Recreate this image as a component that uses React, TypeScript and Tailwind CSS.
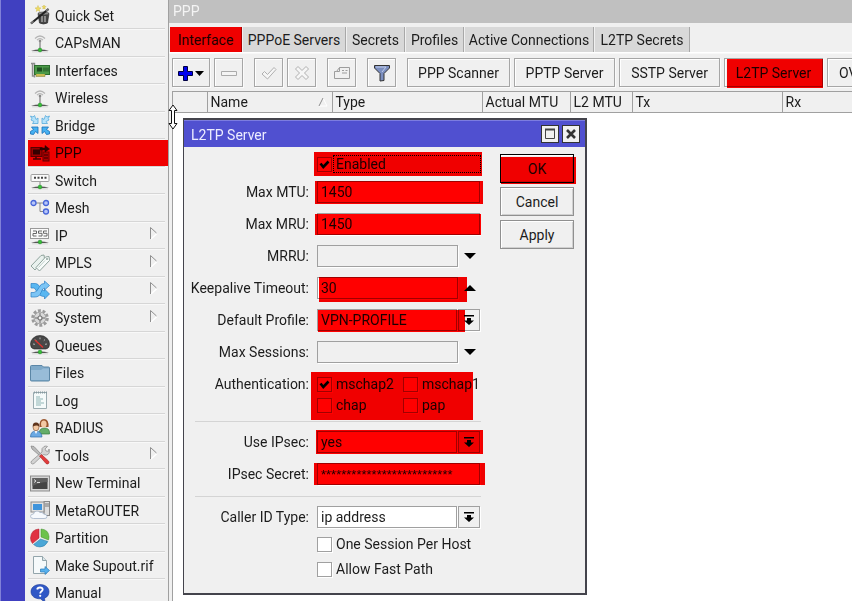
import { useId, useState } from 'react';
import type { ReactNode } from 'react';
import clsx from 'clsx';

/* ---------- sidebar icons, all on a 20x20 grid ---------- */

const nic = (
  <>
    <path d="M1 17.500Q10 15.500 19 17.500 10 18.800 1 17.500z" fill="#555" />
    <path d="M2 18.800h16" stroke="#cfcfcf" strokeWidth=".8" />
    <circle cx="10" cy="17" r="1.900" fill="#35c035" stroke="#2b8a31" strokeWidth=".5" />
  </>
);

const antenna = (
  <>
    <path d="M5 5.500Q10 .5 15 5.500M7 7.200Q10 4 13 7.200" fill="none" stroke="#b5b5b5" strokeWidth="1.200" />
    <path d="M10 8v8" stroke="#9a9a9a" strokeWidth="1.600" />
    <circle cx="10" cy="8" r="1.300" fill="#8a8a8a" />
    {nic}
  </>
);

const icons: Record<string, ReactNode> = {
  wand: (
    <>
      <path d="M8 8.500h11l-1.500 9.500q-4 2-8 0z" fill="#454545" stroke="#222" strokeWidth=".6" />
      <path d="M12 11v6M15 11v6" stroke="#a9a9a9" strokeWidth="1.400" />
      <ellipse cx="13.500" cy="8.500" rx="5.500" ry="1.500" fill="#8d8d8d" stroke="#333" strokeWidth=".6" />
      <path d="M1 18.500L18.500 4" stroke="#222" strokeWidth="2.200" />
      <path d="M1 18.500L3.500 16.400M16 6l2.500-2" stroke="#777" strokeWidth="1.800" />
      <path d="M8 .500l.8 2.200 2.200.3-1.800 1.300.5 2.200L8 5.200 6.300 6.500l.5-2.200L5 3l2.200-.3zM14 0l.5 1.300 1.500.2-1 1 .2 1.500-1.200-.8-1.200.8.2-1.500-1-1 1.500-.2z" fill="#f0dc62" stroke="#c7b23a" strokeWidth=".4" />
    </>
  ),
  antenna,
  card: (
    <>
      <path d="M1 3.500h3.500v14M2.500 4v12h2" fill="none" stroke="#8d8d8d" strokeWidth="1.400" />
      <rect x="4.500" y="5.500" width="15" height="9" fill="#4c9a48" stroke="#2b6d2d" />
      <rect x="7" y="7.500" width="5" height="4" fill="#1d4d20" />
      <path d="M14 7.500v4M16 7.500v4M18 7.500v4" stroke="#1d4d20" />
      <path d="M6 14v2.500h9V14" fill="#c9bb52" stroke="#7e7a35" strokeWidth=".5" />
    </>
  ),
  bridge: (
    <>
      <path d="M.500 1l2.500 1L4.500.500 6 4.500l2-1.500v5.500H2.500L4 6.500 1 5l.8-1.500z" fill="#b5e2fa" stroke="#56a9dc" strokeWidth=".8" />
      <path d="M19.500 1L17 2 15.500.500 14 4.500 12 3v5.500h5.500L16 6.500 19 5l-.8-1.500z" fill="#b5e2fa" stroke="#56a9dc" strokeWidth=".8" />
      <path d="M.500 19l3 .5 2-3L8 18.500V12H1.500l2 2.500-3 2z" fill="#46b1f2" stroke="#176fb6" strokeWidth=".8" />
      <path d="M19.500 19l-3 .5-2-3-2.500 2V12h6.500l-2 2.500 3 2z" fill="#46b1f2" stroke="#176fb6" strokeWidth=".8" />
    </>
  ),
  ppp: (
    <>
      <rect x="1" y="4.500" width="11" height="9" fill="#9a9a9a" stroke="#555" />
      <rect x="3" y="6.500" width="7" height="5" fill="#333" />
      <path d="M3 16h8M6 14v2" stroke="#444" strokeWidth="1.500" />
      <rect x="13" y="9" width="6" height="9" fill="#aaa" stroke="#666" />
      <path d="M14 12h4M14 15h4" stroke="#333" />
      <path d="M10 5h5V2.500L19.500 6 15 9V7h-5z" fill="#333" stroke="#222" strokeWidth=".5" />
    </>
  ),
  switch: (
    <>
      <rect x="1" y="4.500" width="18" height="7" rx="1" fill="#fafafa" stroke="#a0a0a0" />
      <path d="M4 7.800h13" stroke="#444" strokeWidth="2" strokeDasharray="2 1.500" />
      <path d="M10 12v4" stroke="#888" />
      {nic}
    </>
  ),
  mesh: (
    <>
      <path d="M6 5h7M10 5v8.500h4" fill="none" stroke="#888" />
      <circle cx="3.500" cy="5" r="2.500" fill="#b7c6fa" stroke="#4765d8" strokeWidth="1.300" />
      <circle cx="16" cy="5" r="2.500" fill="#b7c6fa" stroke="#4765d8" strokeWidth="1.300" />
      <circle cx="16" cy="13.500" r="2.500" fill="#b7c6fa" stroke="#4765d8" strokeWidth="1.300" />
    </>
  ),
  ip: (
    <>
      <rect x=".5" y="3.500" width="18" height="10" fill="#fafafa" stroke="#999" />
      <path d="M3 6h3.500v2.500H3V11h3.500M12 6H8.500v2.300H12V11H8.500M17 6h-3.500v2.300H17V11h-3.500" fill="none" stroke="#666" />
      {nic}
    </>
  ),
  mpls: (
    <>
      <path d="M1 13L11 2.500l3-.5.5 3.500L5 17z" fill="#e9f1ee" stroke="#8fa39c" />
      <path d="M6 14.500L15.500 4l3.500-.5.500 4L9.500 18z" fill="#f7fbfa" stroke="#8fa39c" />
      <circle cx="17" cy="6" r="1" fill="#8fa39c" />
      <path d="M8.500 14.500L15 7.500" stroke="#bfcfc9" />
    </>
  ),
  routing: (
    <>
      <path d="M1 3.500h4.500q2.500 0 4.500 3.500t4.500 4V9l5 5-5 5v-2.500q-5 0-7.500-4.500T4 8H1z" fill="#59b7f1" stroke="#2c80c4" strokeWidth=".7" />
      <path d="M1 17v-4.500h3Q7 12 9 7.500T14.500 3.500V1l5 4.500-5 4.500V8q-2 0-3.500 4.500T5 17z" fill="#7cc5f5" stroke="#2c80c4" strokeWidth=".7" />
    </>
  ),
  gear: (
    <>
      <circle cx="10" cy="10" r="7.300" fill="none" stroke="#9b9b9b" strokeWidth="3" strokeDasharray="2.900 1.690" />
      <circle cx="10" cy="10" r="5.900" fill="#d9d9d9" stroke="#a2a2a2" strokeWidth="1" />
      <path d="M10 5v3M10 12v3M5 10h3M12 10h3" stroke="#8f8f8f" strokeWidth="1.400" />
      <circle cx="10" cy="10" r="2" fill="#f3f3f3" stroke="#777" strokeWidth="1.200" />
    </>
  ),
  gauge: (
    <>
      <path d="M.500 9a9.500 8.500 0 0 1 19 0q0 4.500-3.500 5H4Q.500 13.500.500 9z" fill="#484848" stroke="#222" strokeWidth=".6" />
      <path d="M3 9l2 .3M5 4.500l1.200 1.200M10 2.500v1.800M15 4.500l-1.200 1.200M17 9l-2 .3" stroke="#b5b5b5" />
      <path d="M5 5l8 7.500" stroke="#e2332f" strokeWidth="1.300" />
      {nic}
    </>
  ),
  folder: (
    <>
      <path d="M.500 3.500q0-1 1-1h10.500l1.500 1.500h5q1 0 1 1v12q0 1-1 1h-17q-1 0-1-1z" fill="#7fa9c8" stroke="#5b86a6" />
      <path d="M1 7h10l2-1.500H19V16.500q0 .5-.5.500h-17Q1 17 1 16.500z" fill="#98bcd8" />
    </>
  ),
  log: (
    <>
      <path d="M3.500 2.500h13v16h-13z" fill="#f5fafa" stroke="#9aabb0" />
      <path d="M4 2.500h13" stroke="#879aa0" strokeWidth="2" strokeDasharray="1 1" />
      <path d="M6 7h4M6 9h7M6 11h5M6 13h8M6 15h5" stroke="#8fb5b5" />
    </>
  ),
  users: (
    <>
      <path d="M9 16q0-6 5.500-6t5 6z" fill="#64ad68" stroke="#34783b" strokeWidth=".7" />
      <path d="M9.500 9Q9 1 14 1t4.500 8z" fill="#98542c" />
      <ellipse cx="13.800" cy="6" rx="2.800" ry="3.500" fill="#f3c9a4" />
      <path d="M.500 19q0-6 5.500-6t6 6z" fill="#6ba9e3" stroke="#2f6dab" strokeWidth=".7" />
      <path d="M4.500 13L6 16l1.500-3z" fill="#fff" />
      <ellipse cx="6" cy="9" rx="3" ry="3.800" fill="#f3c9a4" stroke="#7a4a2a" strokeWidth=".6" />
      <path d="M2.800 8.500Q2.500 4.500 6 4.500t3.200 4Q7 6.500 2.800 8.500z" fill="#5f351d" />
    </>
  ),
  tools: (
    <>
      <path d="M1 1l3 .5L11 9l-1.500 1.500L2 4z" fill="#bbb" stroke="#777" strokeWidth=".6" />
      <path d="M1.500 16L12 7q-1-4 2-5.500 2-1 3.500 0L15 4l1 2 2.500.3L19 4q1.500 5-2.500 6-1.500.3-3-.5L4 18.500q-1.500 1-2.500 0t0-2.500z" fill="#d3d3d3" stroke="#888" strokeWidth=".7" />
      <path d="M9.500 11l2-1.500 7 6.500q1 1.500 0 2.500t-2.500 0z" fill="#e23c3c" stroke="#a32222" strokeWidth=".6" />
    </>
  ),
  terminal: (
    <>
      <rect x=".5" y="3" width="19" height="15" fill="#d5d5d5" stroke="#8d8d8d" />
      <rect x="2.500" y="5" width="15" height="11" fill="#454545" />
      <path d="M2.500 5h15v4q-7 0-15 4z" fill="#5f5f5f" />
      <path d="M4 6.500L6 8 4 9.500M7 9.500h3" fill="none" stroke="#e8e8e8" strokeWidth=".9" />
    </>
  ),
  metarouter: (
    <>
      <rect x="14" y="1.500" width="5.500" height="14" fill="#dedede" stroke="#888" />
      <path d="M15 4h4M15 6h4" stroke="#777" />
      <rect x="1" y="2" width="13" height="10" fill="#e1e1e1" stroke="#8b8b8b" />
      <rect x="3" y="4" width="9" height="6" fill="#3f94dc" />
      <path d="M3.500 18.500q-3 0-3-2.200T3.500 14q.5-3 3.500-3 2 0 3 1.500 2.500-1 3.500 1.500 3.500.2 3.500 2.500t-3 2z" fill="#f6f9fd" stroke="#a3b3c6" strokeWidth=".8" />
    </>
  ),
  partition: (
    <>
      <path d="M9 10V1Q1 1.500.500 10q0 3.500 2 5.500z" fill="#e03242" stroke="#a81d2c" strokeWidth=".5" />
      <path d="M11 9V1q7.500.5 8 7.500 0 2-.5 3.500z" fill="#6cc24c" stroke="#418c2b" strokeWidth=".5" />
      <path d="M10.500 11l7.500 2.500q-3 5.500-8 5.500-4 0-6.500-2.500z" fill="#4aa6d6" stroke="#2a779f" strokeWidth=".5" />
    </>
  ),
  supout: (
    <>
      <path d="M3.500 1.500h9l4 4v13h-13z" fill="#f6fafb" stroke="#93a5ab" />
      <path d="M12.500 1.500v4h4" fill="#dbe5e8" stroke="#93a5ab" />
      <path d="M10.500 14h4.500v-2.500l4.500 4-4.500 4V17h-4.500z" fill="#57b1ee" stroke="#2879b8" strokeWidth=".7" />
    </>
  ),
  manual: (
    <>
      <path d="M10 1.500c5.200 0 9 3 9 7.200 0 3-1.500 5.300-4.500 6.500L15 19.500l-4.500-3.700C5 16 1 13 1 8.700s3.800-7.200 9-7.200z" fill="#3058c6" stroke="#1d3b96" strokeWidth=".6" />
      <path d="M7.200 6.500q.3-2 2.800-2t2.700 2c0 1.700-2.500 1.800-2.500 4" fill="none" stroke="#fff" strokeWidth="1.800" />
      <circle cx="10.200" cy="12.800" r="1.100" fill="#fff" />
    </>
  ),
};

const menu = [
  { label: 'Quick Set', icon: 'wand' },
  { label: 'CAPsMAN', icon: 'antenna' },
  { label: 'Interfaces', icon: 'card' },
  { label: 'Wireless', icon: 'antenna' },
  { label: 'Bridge', icon: 'bridge' },
  { label: 'PPP', icon: 'ppp', marked: true },
  { label: 'Switch', icon: 'switch' },
  { label: 'Mesh', icon: 'mesh' },
  { label: 'IP', icon: 'ip', sub: true },
  { label: 'MPLS', icon: 'mpls', sub: true },
  { label: 'Routing', icon: 'routing', sub: true },
  { label: 'System', icon: 'gear', sub: true },
  { label: 'Queues', icon: 'gauge' },
  { label: 'Files', icon: 'folder' },
  { label: 'Log', icon: 'log' },
  { label: 'RADIUS', icon: 'users' },
  { label: 'Tools', icon: 'tools', sub: true },
  { label: 'New Terminal', icon: 'terminal' },
  { label: 'MetaROUTER', icon: 'metarouter' },
  { label: 'Partition', icon: 'partition' },
  { label: 'Make Supout.rif', icon: 'supout' },
  { label: 'Manual', icon: 'manual' },
];

// Red marker laid over a control, the text stays readable below it.
function Marker({ className = 'inset-0' }: { className?: string }) {
  return <span className={clsx('pointer-events-none absolute bg-[#ff0000] mix-blend-multiply', className)} />;
}

function Sidebar() {
  return (
    <nav className="w-[143px] shrink-0 pt-[2px] pl-[3px]">
      <ul>
        {menu.map((item) => (
          <li key={item.label} className="relative odd:h-[27px] even:h-7">
            <button className="flex h-full w-[137px] items-center border-b border-[#d6d6d6] pl-[2px] text-left shadow-[0_1px_0_#f8f8f8]">
              <svg viewBox="0 0 20 20" className="size-5 shrink-0">{icons[item.icon]}</svg>
              <span className="flex-1 pt-px pl-[5px] whitespace-nowrap">{item.label}</span>
              {item.sub && (
                <svg viewBox="0 0 10 14" className="mr-[6px] mb-1 h-[14px] w-[10px]">
                  <path d="M2 13L8 7.500" stroke="#fff" strokeWidth="1.500" />
                  <path d="M1.500 13V1.500L7.500 7" fill="none" stroke="#8f8f8f" />
                </svg>
              )}
            </button>
            {item.marked && <Marker className="inset-y-px left-0 w-[140px]" />}
          </li>
        ))}
      </ul>
    </nav>
  );
}

/* ---------- PPP window ---------- */

const tabs = [
  { label: 'Interface', width: 'w-[72px]' },
  { label: 'PPPoE Servers', width: 'w-[103px]' },
  { label: 'Secrets', width: 'w-[58px]' },
  { label: 'Profiles', width: 'w-[58px]' },
  { label: 'Active Connections', width: 'w-[129px]' },
  { label: 'L2TP Secrets', width: 'w-[95px]' },
];

const columns = [
  { label: '', width: 'w-[34px]' },
  { label: 'Name', width: 'w-[125px]', sorted: true },
  { label: 'Type', width: 'w-[150px]' },
  { label: 'Actual MTU', width: 'w-[88px]' },
  { label: 'L2 MTU', width: 'w-[62px]' },
  { label: 'Tx', width: 'w-[150px]' },
  { label: 'Rx', width: 'w-[151px]' },
];

function ToolButton({ className, label, children }: { className?: string; label?: string; children: ReactNode }) {
  return (
    <button
      aria-label={label}
      className={clsx(
        'relative flex h-[29px] shrink-0 items-center justify-center border border-[#a6a6a6] bg-[#f0f0f0] whitespace-nowrap shadow-[inset_1px_1px_0_#fff,1px_1px_0_#fafafa]',
        className,
      )}
    >
      {children}
    </button>
  );
}

function Toolbar() {
  return (
    <div className="flex gap-1 pt-1 pl-[3px]">
      <ToolButton label="Add" className="w-[38px]">
        <svg viewBox="0 0 28 16" className="h-4 w-7">
          <path d="M6.500 1.500h4v5h5v4h-5v5h-4v-5h-5v-4h5z" fill="#0000f0" stroke="#000040" />
          <path d="M18 6h9l-4.500 5z" fill="#000" />
        </svg>
      </ToolButton>
      <ToolButton label="Remove" className="w-[29px]">
        <svg viewBox="0 0 16 16" className="size-4"><path d="M.500 6.500h15v4H.500z" fill="#f4f4f4" stroke="#ababab" /></svg>
      </ToolButton>
      <ToolButton label="Enable" className="ml-[7px] w-[29px]">
        <svg viewBox="0 0 16 16" className="size-4">
          <path d="M1 9l2.500-2.500 3 3L13 2.500l2 2L6.500 14z" fill="#f6f6f6" stroke="#b0b0b0" />
        </svg>
      </ToolButton>
      <ToolButton label="Disable" className="w-[29px]">
        <svg viewBox="0 0 16 16" className="size-4">
          <path d="M1.500 4L4 1.500l4 4 4-4L14.500 4l-4 4 4 4-2.500 2.500-4-4-4 4L1.500 12l4-4z" fill="#f6f6f6" stroke="#b0b0b0" />
        </svg>
      </ToolButton>
      <ToolButton label="Comment" className="ml-[7px] w-[29px]">
        <svg viewBox="0 0 16 16" className="size-4">
          <path d="M5.500 2.500h10v11H.500v-7h2zM5.500 2.500v4h-3M8 5.500h2M11.500 5.500h2M8 8h5" fill="none" stroke="#9d9d9d" />
        </svg>
      </ToolButton>
      <ToolButton label="Filter" className="ml-[7px] w-[29px]">
        <svg viewBox="0 0 16 18" className="h-[18px] w-4">
          <path d="M.500 1.500h15v2.500L10 9.500v7l-4 .5V9.500L.500 4z" fill="#7c8fc0" stroke="#333" />
          <path d="M2 3h10L8 8" fill="none" stroke="#c3cfec" />
        </svg>
      </ToolButton>
      <ToolButton className="ml-[7px] w-[103px]">PPP Scanner</ToolButton>
      <ToolButton className="w-[101px]">PPTP Server</ToolButton>
      <ToolButton className="w-[101px]">SSTP Server</ToolButton>
      <ToolButton className="w-[99px]">
        L2TP Server
        <Marker className="-right-px -bottom-[2px] top-0 left-[2px]" />
      </ToolButton>
      <ToolButton className="w-[104px]">OVPN Server</ToolButton>
    </div>
  );
}

function PppWindow() {
  return (
    <main className="flex min-w-0 flex-1 flex-col overflow-hidden border-l border-[#a0a0a0]">
      <h1 className="h-[23px] bg-[#c0c0c0] pl-1 leading-[23px] text-[#f4f4f4]">PPP</h1>
      <div role="tablist" className="flex items-end gap-px border-b border-white pt-1 pl-px">
        {tabs.map((tab, i) => (
          <button
            key={tab.label}
            role="tab"
            aria-selected={i === 0}
            className={clsx(
              'relative h-[25px] border-r border-[#a8a8a8] whitespace-nowrap',
              tab.width,
              i === 0 ? 'bg-[#f0f0f0]' : 'bg-[#d8d8d8] pt-px',
            )}
          >
            {tab.label}
            {i === 0 && <Marker className="-right-px inset-y-0 left-0" />}
          </button>
        ))}
      </div>
      <div className="border-t border-[#f8f8f8]">
        <Toolbar />
      </div>
      <div className="mt-1 ml-[3px] flex-1 border-l border-[#a0a0a0] bg-white">
        <table className="w-[760px] table-fixed border-collapse text-left">
          <thead>
            <tr className="h-[21px] bg-[#f0f0f0]">
              {columns.map((col) => (
                <th key={col.label} className={clsx('border-y border-r border-[#a0a0a0] p-0 pl-[3px] font-normal', col.width)}>
                  <span className="flex items-center justify-between leading-5 whitespace-nowrap">
                    {col.label}
                    {col.sorted && (
                      <svg viewBox="0 0 10 10" className="mr-1 size-[10px]">
                        <path d="M5 1l4 8H1" fill="none" stroke="#fff" />
                        <path d="M1 9l4-8" stroke="#8c8c8c" />
                      </svg>
                    )}
                  </span>
                </th>
              ))}
            </tr>
          </thead>
        </table>
      </div>
    </main>
  );
}

/* ---------- L2TP Server dialog ---------- */

const fieldBox = 'h-[22px] border border-[#a0a0a0] pl-[3px] shadow-[1px_1px_0_#fff] outline-none';

function Row({ label, htmlFor, children }: { label: string; htmlFor?: string; children: ReactNode }) {
  return (
    <div className="flex h-8 items-center">
      <label htmlFor={htmlFor} className="w-[125px] shrink-0 text-right whitespace-nowrap">{label}</label>
      <div className="relative ml-2 flex items-center">{children}</div>
    </div>
  );
}

function Toggle({ direction = 'down', label }: { direction?: 'up' | 'down'; label: string }) {
  return (
    <button aria-label={label} className="flex h-[22px] w-6 items-center justify-center">
      <svg viewBox="0 0 12 6" className="h-[6px] w-3">
        <path d={direction === 'up' ? 'M0 6h12L6 0z' : 'M0 0h12L6 6z'} fill="#000" />
      </svg>
    </button>
  );
}

function TextRow({ label, value = '', toggle, marker }: { label: string; value?: string; toggle?: 'up' | 'down'; marker?: string }) {
  const id = useId();
  return (
    <Row label={`${label}:`} htmlFor={id}>
      <input
        id={id}
        defaultValue={value}
        className={clsx(fieldBox, toggle ? 'w-[141px]' : 'w-[163px]', value ? 'bg-white' : 'bg-[#f0f0f0]')}
      />
      {toggle && <Toggle direction={toggle} label={`Toggle ${label}`} />}
      {marker && <Marker className={marker} />}
    </Row>
  );
}

function SelectRow({ label, value, marker }: { label: string; value: string; marker?: string }) {
  const id = useId();
  return (
    <Row label={`${label}:`} htmlFor={id}>
      <select id={id} className={clsx(fieldBox, 'w-[140px] appearance-none bg-white')}>
        <option>{value}</option>
      </select>
      <button aria-label={`Open ${label}`} className="ml-px flex h-[22px] w-[22px] items-center justify-center border border-[#a0a0a0] bg-[#f0f0f0] shadow-[1px_1px_0_#fff]">
        <svg viewBox="0 0 10 10" className="size-[10px]">
          <path d="M0 0h10v1.500H0zM3 3h4v2.500h3L5 10 0 5.500h3z" fill="#000" />
        </svg>
      </button>
      {marker && <Marker className={marker} />}
    </Row>
  );
}

function Check({ label, checked = false, focused = false }: { label: string; checked?: boolean; focused?: boolean }) {
  const [on, setOn] = useState(checked);
  return (
    <label className="flex items-center whitespace-nowrap">
      <span className="relative flex">
        <input
          type="checkbox"
          checked={on}
          onChange={() => setOn(!on)}
          className="size-[15px] appearance-none border border-[#a0a0a0] bg-white shadow-[1px_1px_0_#fff]"
        />
        {on && (
          <svg viewBox="0 0 15 15" className="pointer-events-none absolute inset-0 size-[15px]">
            <path d="M3.500 6.500l2.800 3.500L11.500 4.500" fill="none" stroke="#000" strokeWidth="2.600" />
          </svg>
        )}
      </span>
      <span className={clsx('ml-px border border-dotted pl-[2px] leading-4', focused ? 'w-[148px] border-black' : 'border-transparent')}>
        {label}
      </span>
    </label>
  );
}

function DialogButton({ label, primary }: { label: string; primary?: boolean }) {
  return (
    <button className={clsx('relative h-[29px] w-[74px] border bg-[#f0f0f0] shadow-[inset_1px_1px_0_#fff,inset_-1px_-1px_0_#d0d0d0]', primary ? 'border-black' : 'border-[#909090]')}>
      {label}
      {primary && <Marker className="top-[2px] -right-[3px] -bottom-[2px] left-0" />}
    </button>
  );
}

function L2tpDialog() {
  return (
    <section
      role="dialog"
      aria-label="L2TP Server"
      className="absolute top-[118px] left-[183px] isolate w-[404px] border-2 border-l border-[#44444c] bg-[#f0f0f0]"
    >
      <header className="flex h-[27px] items-center gap-[3px] border-t border-[#7c7ce0] bg-[#5050d0] pr-[5px] pl-[7px] text-[#ececff]">
        <h2 className="flex-1 pt-[2px]">L2TP Server</h2>
        <button aria-label="Maximize" className="flex size-[18px] items-center justify-center border border-[#333] bg-[#f0f0f0]">
          <svg viewBox="0 0 12 12" className="size-3">
            <path d="M1.500 1.500h9v9h-9z" fill="none" stroke="#444" />
            <path d="M1 1.500h10" stroke="#444" strokeWidth="2" />
          </svg>
        </button>
        <button aria-label="Close" className="flex size-[18px] items-center justify-center border border-[#333] bg-[#f0f0f0]">
          <svg viewBox="0 0 12 12" className="size-3"><path d="M2 2l8 8M10 2l-8 8" stroke="#333" strokeWidth="2.600" /></svg>
        </button>
      </header>

      <div className="flex pt-px pb-[15px]">
        <form className="w-[297px]" onSubmit={(e) => e.preventDefault()}>
          <Row label="">
            <Check label="Enabled" checked focused />
            <Marker className="-inset-y-[3px] -right-px -left-[3px]" />
          </Row>
          <div className="-mt-[4px]">
            <TextRow label="Max MTU" value="1450" marker="top-0 -right-[3px] -bottom-px -left-[2px]" />
            <TextRow label="Max MRU" value="1450" marker="top-px -right-px bottom-0 -left-[2px]" />
            <TextRow label="MRRU" toggle="down" />
            <TextRow label="Keepalive Timeout" value="30" toggle="up" marker="top-0 right-[15px] -bottom-[3px] left-[2px]" />
            <SelectRow label="Default Profile" value="VPN-PROFILE" marker="top-px right-[15px] -bottom-px left-px" />
            <TextRow label="Max Sessions" toggle="down" />
          </div>
          <div className="flex pb-[9px]">
            <span className="w-[125px] pt-[7px] text-right">Authentication:</span>
            <div className="relative mt-[7px] ml-2 grid grid-cols-[86px_auto] gap-y-[3px]">
              <Check label="mschap2" checked />
              <Check label="mschap1" />
              <Check label="chap" />
              <Check label="pap" />
              <Marker className="-top-[3px] -bottom-[6px] -left-[6px] w-[162px]" />
            </div>
          </div>
          <hr className="-mt-[2px] ml-[11px] border-[#d4d4d4]" />
          <div className="pt-1 pb-[6px]">
            <SelectRow label="Use IPsec" value="yes" marker="-top-px -right-[3px] -bottom-px -left-px" />
            <Row label="IPsec Secret:" htmlFor="ipsec-secret">
              <input
                id="ipsec-secret"
                defaultValue="**************************"
                className={clsx(fieldBox, "w-[163px] bg-white font-['Liberation_Sans'] text-[13px]")}
              />
              <Marker className="-right-[5px] inset-y-0 -left-[3px]" />
            </Row>
          </div>
          <hr className="ml-[11px] border-[#d4d4d4]" />
          <div className="pt-1">
            <SelectRow label="Caller ID Type" value="ip address" />
          </div>
          <div className="ml-[133px] flex flex-col gap-[7px] pt-[2px]">
            <Check label="One Session Per Host" />
            <Check label="Allow Fast Path" />
          </div>
        </form>
        <div className="ml-[19px] flex flex-col gap-1 pt-[6px]">
          <DialogButton label="OK" primary />
          <DialogButton label="Cancel" />
          <DialogButton label="Apply" />
        </div>
      </div>
    </section>
  );
}

export default function App() {
  return (
    <div className="relative flex h-screen overflow-hidden bg-[#f0f0f0] font-[Roboto,sans-serif] text-[14px] leading-[18px] text-[#1c1c1c]">
      <div className="w-[25px] shrink-0 border-l border-[#8080d8] bg-[#4040c0]" />
      <Sidebar />
      <PppWindow />
      <L2tpDialog />
      <svg viewBox="0 0 10 26" className="pointer-events-none absolute top-[104px] left-[168px] h-[26px] w-[10px]">
        <path d="M5 1l4 5.500H6.500v13H9L5 25l-4-5.500h2.500v-13H1z" fill="#fff" stroke="#111" />
      </svg>
    </div>
  );
}
